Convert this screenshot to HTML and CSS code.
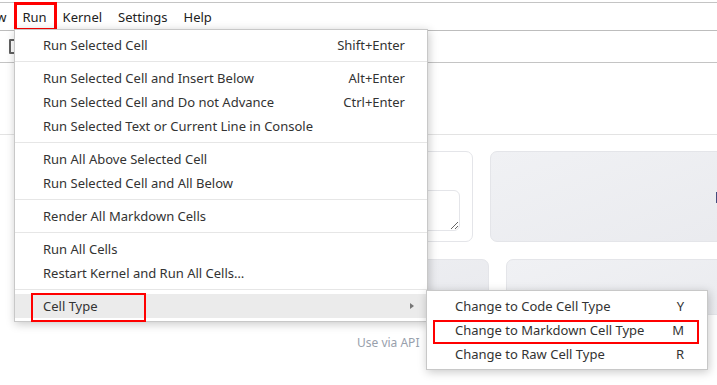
FILE: index.html
```html
<!DOCTYPE html>
<html lang="en-US">
<head>
  <meta charset="UTF-8">
  <title>Run menu</title>
  <link rel="stylesheet" href="styles.css">
</head>
<body>
  <div class="menubar">
    <div class="menubar-item">View</div>
    <div class="menubar-item active marked">Run</div>
    <div class="menubar-item">Kernel</div>
    <div class="menubar-item">Settings</div>
    <div class="menubar-item">Help</div>
  </div>
  <div class="toolbar">
    <span class="tool-save"></span>
  </div>
  <div class="header"></div>

  <section class="content">
    <div class="row first">
      <div class="card plain">
        <textarea class="box"></textarea>
      </div>
      <div class="card filled">
        <span class="logo-bit"></span>
      </div>
    </div>
    <div class="row second">
      <div class="card filled wide"></div>
      <div class="card filled"></div>
    </div>
    <div class="footer">Use via API</div>
  </section>

  <ul class="menu run-menu">
    <li class="item"><span>Run Selected Cell</span><span class="key">Shift+Enter</span></li>
    <li class="sep"></li>
    <li class="item"><span>Run Selected Cell and Insert Below</span><span class="key">Alt+Enter</span></li>
    <li class="item"><span>Run Selected Cell and Do not Advance</span><span class="key">Ctrl+Enter</span></li>
    <li class="item"><span>Run Selected Text or Current Line in Console</span></li>
    <li class="sep"></li>
    <li class="item"><span>Run All Above Selected Cell</span></li>
    <li class="item"><span>Run Selected Cell and All Below</span></li>
    <li class="sep"></li>
    <li class="item"><span>Render All Markdown Cells</span></li>
    <li class="sep"></li>
    <li class="item"><span>Run All Cells</span></li>
    <li class="item"><span>Restart Kernel and Run All Cells…</span></li>
    <li class="sep"></li>
    <li class="item open"><span>Cell Type</span><span class="arrow"></span><i class="mark cell-type-mark"></i></li>
  </ul>

  <ul class="menu sub-menu">
    <li class="item"><span>Change to Code Cell Type</span><span class="key">Y</span></li>
    <li class="item"><span>Change to Markdown Cell Type</span><span class="key">M</span><i class="mark md-mark"></i></li>
    <li class="item"><span>Change to Raw Cell Type</span><span class="key">R</span></li>
  </ul>
</body>
</html>
```

FILE: styles.css
```css
html, body {
  margin: 0;
  height: 100%;
  overflow: hidden;
}
body {
  background: #fff;
  color: #333;
  font-family: "Noto Sans", "Open Sans", Arial, sans-serif;
  font-size: 13px;
  position: relative;
  padding-top: 2px;
  box-sizing: border-box;
}

/* top bars */
.menubar {
  display: flex;
  height: 27px;
  border-top: 1px solid #c4c4c4;
  border-bottom: 1px solid #bdbdbd;
  margin-left: -30px;
}
.menubar-item {
  position: relative;
  padding: 0 8px;
  line-height: 28px;
  color: #222;
}
.menubar-item.marked::after {
  content: "";
  position: absolute;
  left: 0;
  right: -2px;
  top: -1px;
  bottom: -1px;
  border: 3px solid #f00;
}
.toolbar {
  height: 31px;
  border-bottom: 1px solid #c4c4c4;
  position: relative;
}
.tool-save {
  position: absolute;
  left: 9px;
  top: 8px;
  width: 10px;
  height: 11px;
  border: 2px solid #616161;
  border-radius: 1px;
}
.header {
  height: 71px;
  border-bottom: 1px solid #e3e3e3;
}

/* page behind the menu */
.content {
  padding: 16px 0 0 173px;
  width: 760px;
}
.row {
  display: flex;
  gap: 17px;
}
.row.second {
  margin-top: 17px;
}
.card {
  border: 1px solid #e4e5e9;
  border-radius: 7px;
  box-sizing: border-box;
  position: relative;
}
.card.plain {
  background: #fff;
  width: 300px;
  height: 91px;
  padding: 38px 12px 10px;
}
.card.filled {
  background: linear-gradient(160deg, #f0f1f4, #e9eaee);
  width: 300px;
  height: 91px;
}
.row.second .card {
  height: 56px;
}
.row.second .card.wide {
  width: 316px;
}
.box {
  display: block;
  width: 100%;
  height: 41px;
  box-sizing: border-box;
  border: 1px solid #e4e5e9;
  border-radius: 6px;
  resize: vertical;
  font: inherit;
}
.logo-bit {
  position: absolute;
  left: 225px;
  top: 40px;
  width: 3px;
  height: 11px;
  background: linear-gradient(90deg, #3b4a8c, #7a5a3a);
}
.footer {
  margin: 19px 0 0 184px;
  color: #98a0ac;
  font-size: 12px;
}

/* menus */
.menu {
  position: absolute;
  list-style: none;
  margin: 0;
  padding: 3px 0;
  background: #fff;
  border: 1px solid #c8c8c8;
  box-shadow: 1px 2px 9px rgba(0, 0, 0, 0.22);
  box-sizing: border-box;
}
.run-menu {
  left: 14px;
  top: 29px;
  width: 414px;
}
.sub-menu {
  left: 426px;
  top: 290px;
  width: 282px;
}
.item {
  display: flex;
  justify-content: space-between;
  align-items: center;
  height: 24px;
  padding: 0 22px 0 28px;
  position: relative;
}
.sub-menu .item {
  padding-right: 23px;
}
.item.open {
  background: #ebebeb;
}
.key {
  color: #333;
}
.sep {
  height: 1px;
  background: #e6e6e6;
  margin: 4px 0;
}
.arrow {
  width: 0;
  height: 0;
  border-left: 4px solid #777;
  border-top: 3.5px solid transparent;
  border-bottom: 3.5px solid transparent;
  margin-right: -9px;
}
.mark {
  position: absolute;
  border: 2px solid #f00;
  box-sizing: border-box;
}
.cell-type-mark {
  left: 16px;
  top: -1px;
  width: 115px;
  height: 29px;
}
.md-mark {
  left: 6px;
  top: 2px;
  width: 266px;
  height: 24px;
}
```
